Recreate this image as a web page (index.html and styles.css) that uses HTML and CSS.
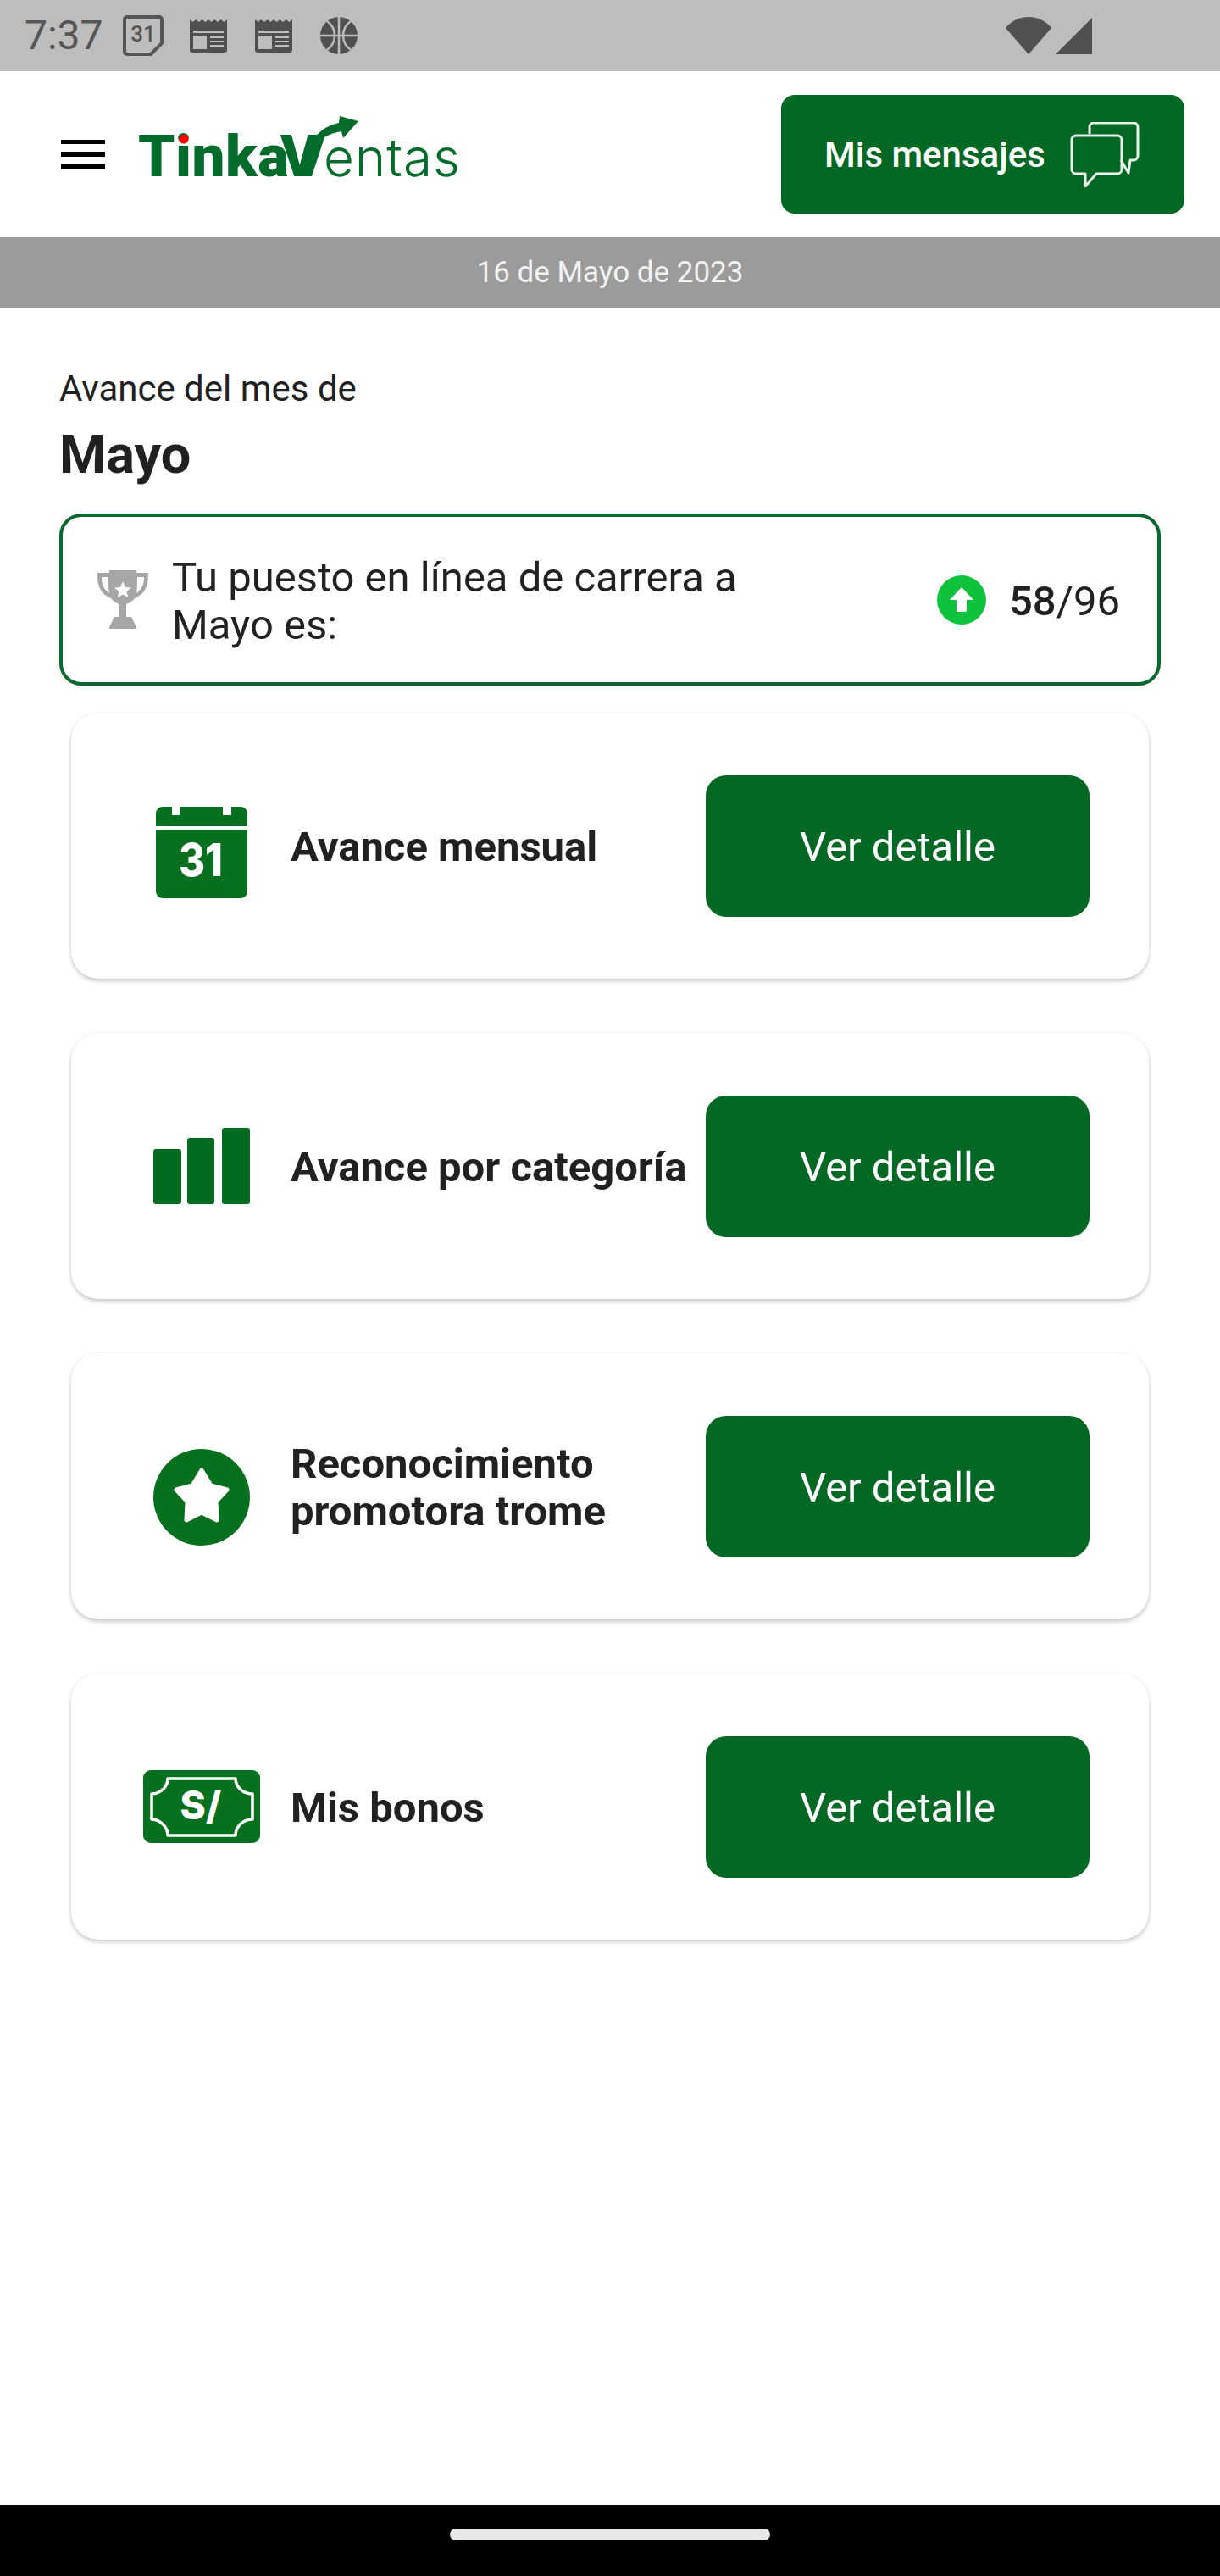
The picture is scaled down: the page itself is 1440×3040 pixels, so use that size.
FILE: index.html
```html
<!DOCTYPE html>
<html lang="es">
<head>
<meta charset="utf-8">
<title>TinkaVentas</title>
<link rel="stylesheet" href="styles.css">
</head>
<body>
<div class="app">
  <div class="status">
    <span class="time">7:37</span>
    <svg class="st-cal" viewBox="0 0 48 48"><path class="st-line" d="M5 2h38a3 3 0 0 1 3 3v28L33 46H5a3 3 0 0 1-3-3V5a3 3 0 0 1 3-3z"/><text x="24" y="31" class="st-num">31</text></svg>
    <svg class="st-news" viewBox="0 0 44 39"><path class="st-fill" d="M0 0l3.7 3 3.6-3 3.7 3 3.7-3 3.6 3 3.7-3 3.7 3 3.6-3 3.7 3 3.7-3 3.6 3L44 0v36a3 3 0 0 1-3 3H3a3 3 0 0 1-3-3z"/><path class="st-gap" d="M4 13h36v3H4zM4 19h16v16H4zM24 20h16v2H24zM24 25h16v2H24zM24 30h16v2H24z"/></svg>
    <svg class="st-news" viewBox="0 0 44 39"><path class="st-fill" d="M0 0l3.7 3 3.6-3 3.7 3 3.7-3 3.6 3 3.7-3 3.7 3 3.6-3 3.7 3 3.7-3 3.6 3L44 0v36a3 3 0 0 1-3 3H3a3 3 0 0 1-3-3z"/><path class="st-gap" d="M4 13h36v3H4zM4 19h16v16H4zM24 20h16v2H24zM24 25h16v2H24zM24 30h16v2H24z"/></svg>
    <svg class="st-ball" viewBox="0 0 44 44"><circle class="st-fill" cx="22" cy="22" r="22"/><path class="st-stroke" d="M22 0v44M0 22h44M8 5c7 5 9 11 9 17s-2 12-9 17M36 5c-7 5-9 11-9 17s2 12 9 17"/></svg>
    <span class="st-space"></span>
    <svg class="st-wifi" viewBox="0 0 54 44"><path class="st-fill" d="M27 44L0 13C7 4 17 0 27 0s20 4 27 13z"/></svg>
    <svg class="st-signal" viewBox="0 0 43 43"><path class="st-fill" d="M43 0v43H0z"/></svg>
  </div>

  <header class="topbar">
    <div class="burger"><span></span><span></span><span></span></div>
    <svg class="logo" viewBox="0 0 380 80" role="img" aria-label="TinkaVentas">
      <text class="logo-bold" x="0" y="75" textLength="178" lengthAdjust="spacing">Tinka</text>
      <circle class="logo-dot" cx="54" cy="31" r="5.500"/>
      <text class="logo-bold" x="168" y="75">V</text>
      <path class="logo-green" d="M205 75L220 29Q228 24 240 22L242 30 260 10 238 4 237 12Q222 14 207 30L190 75z"/>
      <text class="logo-light" x="219" y="75" textLength="161" lengthAdjust="spacing">entas</text>
    </svg>
    <button class="msg-btn">
      <span>Mis mensajes</span>
      <svg class="msg-icon" viewBox="0 0 82 77"><path class="msg-line" d="M23 14V6a5 5 0 0 1 5-5h47a5 5 0 0 1 5 5v34a5 5 0 0 1-5 5h-4l-2 15-9-15M7 16h49a5 5 0 0 1 5 5v35a5 5 0 0 1-5 5H31L18 76V61H7a5 5 0 0 1-5-5V21a5 5 0 0 1 5-5z"/></svg>
    </button>
  </header>

  <div class="dateband">16 de Mayo de 2023</div>

  <main class="content">
    <p class="eyebrow">Avance del mes de</p>
    <h1 class="month">Mayo</h1>

    <section class="rank">
      <svg class="trophy" viewBox="0 0 60 69"><path class="trophy-fill" d="M14 0h32v3h14c0 14-2 24-16 30-3 4-7 6-10 7v15h6l6 12v2H14v-2l6-12h6V40c-3-1-7-3-10-7C2 27 0 17 0 3h14zM5 8c0 8 2 14 9 19-1-5-1-13-1-19zm50 0h-8c0 6 0 14-1 19 7-5 9-11 9-19z"/><path class="trophy-star" d="M30 13l3 7 7 .6-5.400 4.600 1.700 7L30 28.400l-6.300 3.800 1.700-7L20 20.600l7-.6z"/></svg>
      <p class="rank-text">Tu puesto en línea de carrera a<br>Mayo es:</p>
      <svg class="rank-arrow" viewBox="0 0 58 58"><circle class="rank-circle" cx="29" cy="29" r="29"/><path class="rank-up" d="M29 14L43 29h-8v12a2 2 0 0 1-2 2h-8a2 2 0 0 1-2-2V29h-8z"/></svg>
      <p class="rank-num"><b>58</b>/96</p>
    </section>

    <section class="card">
      <div class="card-icon">
        <svg class="ic-cal" viewBox="0 0 108 108"><path class="ic-green" d="M8 0h11v10h9V0h51v10h10V0h11a8 8 0 0 1 8 8v15H0V8a8 8 0 0 1 8-8zM0 27h108v73a8 8 0 0 1-8 8H8a8 8 0 0 1-8-8z"/><text class="ic-num" x="53" y="82" textLength="52" lengthAdjust="spacingAndGlyphs">31</text></svg>
      </div>
      <h2 class="card-title">Avance mensual</h2>
      <a class="detail">Ver detalle</a>
    </section>

    <section class="card">
      <div class="card-icon">
        <svg class="ic-bars" viewBox="0 0 114 90"><rect class="ic-green" x="0" y="25" width="33" height="65" rx="3"/><rect class="ic-green" x="40" y="12" width="32" height="78" rx="3"/><rect class="ic-green" x="81" y="0" width="33" height="90" rx="3"/></svg>
      </div>
      <h2 class="card-title">Avance por categoría</h2>
      <a class="detail">Ver detalle</a>
    </section>

    <section class="card">
      <div class="card-icon">
        <svg class="ic-star" viewBox="0 0 114 114"><circle class="ic-green" cx="57" cy="57" r="57"/><path class="ic-white" d="M57 25L68 43l19 5-13 14 1 22-18-9-18 9 1-22-13-14 19-5z"/></svg>
      </div>
      <h2 class="card-title">Reconocimiento<br>promotora trome</h2>
      <a class="detail">Ver detalle</a>
    </section>

    <section class="card">
      <div class="card-icon">
        <svg class="ic-bill" viewBox="0 0 138 86"><rect class="ic-green" width="138" height="86" rx="9"/><path class="ic-frame" d="M29 10H109A20 18 0 0 0 129 28V58A20 19 0 0 0 109 77H29A20 19 0 0 0 10 58V28A20 18 0 0 0 29 10z"/><text class="ic-sol" x="68" y="58">S/</text></svg>
      </div>
      <h2 class="card-title">Mis bonos</h2>
      <a class="detail">Ver detalle</a>
    </section>
  </main>

  <div class="navbar"><span class="pill"></span></div>
</div>
</body>
</html>
```
FILE: styles.css
```css
* { box-sizing: border-box; }
html, body { margin: 0; padding: 0; background: #fff; }
body { font-family: Roboto, "Liberation Sans", sans-serif; color: #212121; }
p, h1, h2 { margin: 0; }

.app { width: 1440px; height: 3040px; display: flex; flex-direction: column; overflow: hidden; }

/* status bar */
.status { height: 84px; background: #bdbdbd; display: flex; align-items: center; padding-left: 29px; flex: none; }
.time { font-size: 48px; color: #555; width: 93px; line-height: 84px; }
.status svg { display: block; flex: none; }
.st-cal { width: 48px; height: 48px; margin-left: 23px; }
.st-news { width: 44px; height: 39px; }
.st-cal + .st-news { margin-left: 31px; }
.st-news + .st-news { margin-left: 33px; }
.st-ball { width: 44px; height: 44px; margin-left: 33px; }
.st-space { flex: 1; }
.st-wifi { width: 54px; height: 44px; }
.st-signal { width: 43px; height: 43px; margin-left: 5px; margin-right: 151px; }
.st-line { fill: none; stroke: #555; stroke-width: 4; }
.st-num { font: 500 26px Roboto, sans-serif; fill: #555; text-anchor: middle; }
.st-fill { fill: #505050; }
.st-gap { fill: #bdbdbd; }
.st-stroke { fill: none; stroke: #bdbdbd; stroke-width: 2.500; }

/* header */
.topbar { height: 196px; background: #fff; display: flex; align-items: center; padding: 0 42px 0 72px; flex: none; }
.burger { width: 52px; height: 35px; display: flex; flex-direction: column; justify-content: space-between; flex: none; }
.burger span { display: block; height: 5.500px; background: #000; }
.logo { width: 380px; height: 80px; margin-left: 39px; margin-bottom: 18px; flex: none; overflow: visible; }
.logo-bold { font: 900 69px Roboto, sans-serif; fill: #036b2c; }
.logo-light { font: 300 62px Inter, sans-serif; fill: #036b2c; }
.logo-green { fill: #036b2c; }
.logo-dot { fill: #f00; }
.msg-btn { margin-left: auto; width: 476px; height: 140px; background: #036824; border: 0; border-radius: 16px; color: #fff; display: flex; align-items: center; padding: 0 0 0 51px; font: 500 42px Roboto, sans-serif; }
.msg-icon { width: 82px; height: 77px; margin-left: 29px; flex: none; }
.msg-line { fill: none; stroke: #eaf3ea; stroke-width: 3; stroke-linejoin: round; }

.dateband { height: 83px; background: #9b9b9b; color: #f2f2f2; font-size: 35px; display: flex; align-items: center; justify-content: center; flex: none; }

/* content */
.content { flex: 1; padding: 72px 70px 0; }
.eyebrow { font-size: 42px; line-height: 47px; }
.month { font-size: 63px; font-weight: 700; line-height: 70px; margin-top: 20px; }

.rank { height: 203px; margin-top: 34px; border: 4px solid #0c6630; border-radius: 26px; display: flex; align-items: center; padding: 0 44px 0 41px; }
.trophy { width: 60px; height: 69px; flex: none; }
.trophy-fill { fill: #a6a6a6; fill-rule: evenodd; }
.trophy-star { fill: #fff; }
.rank-text { font-size: 49px; line-height: 56px; margin-left: 28px; flex: 1; margin-top: 4px; }
.rank-arrow { width: 58px; height: 58px; flex: none; }
.rank-circle { fill: #0ec33b; }
.rank-up { fill: #fff; }
.rank-num { font-size: 49px; margin-left: 27px; padding-top: 3px; }
.rank-num b { font-weight: 500; }

.card { height: 314px; margin: 0 14px 64px; background: #fff; border-radius: 32px; box-shadow: 0 3px 5px rgba(0,0,0,.2), 0 0 3px rgba(0,0,0,.07); display: flex; align-items: center; padding: 0 70px 0 85px; }
.rank + .card { margin-top: 32px; }
.card-icon { width: 138px; display: flex; justify-content: center; flex: none; }
.card-icon svg { display: block; }
.card-title { font-size: 49px; font-weight: 700; line-height: 56px; margin-left: 36px; flex: 1; white-space: nowrap; color: #212121; padding-top: 3px; }
.detail { width: 453px; height: 167px; flex: none; background: #036824; color: #fff; border-radius: 24px; font-size: 49px; padding-top: 3px; display: flex; align-items: center; justify-content: center; }

.ic-cal { width: 108px; height: 108px; margin-top: 16px; }
.ic-bars { width: 114px; height: 90px; }
.ic-star { width: 114px; height: 114px; margin-top: 26px; }
.ic-bill { width: 138px; height: 86px; }
.ic-green { fill: #07701f; }
.ic-bars .ic-green { fill: #036b1f; }
.ic-white { fill: #fff; stroke: #fff; stroke-width: 5; stroke-linejoin: round; }
.ic-num { font: 800 54px Inter, sans-serif; fill: #fff; text-anchor: middle; }
.ic-frame { fill: none; stroke: #fff; stroke-width: 3.500; stroke-linejoin: round; }
.ic-sol { font: 800 46px Inter, sans-serif; fill: #fff; text-anchor: middle; }

.navbar { height: 84px; background: #000; display: flex; align-items: center; justify-content: center; flex: none; }
.pill { width: 378px; height: 14px; background: #e8e8e8; border-radius: 7px; margin-top: -14px; }
```
